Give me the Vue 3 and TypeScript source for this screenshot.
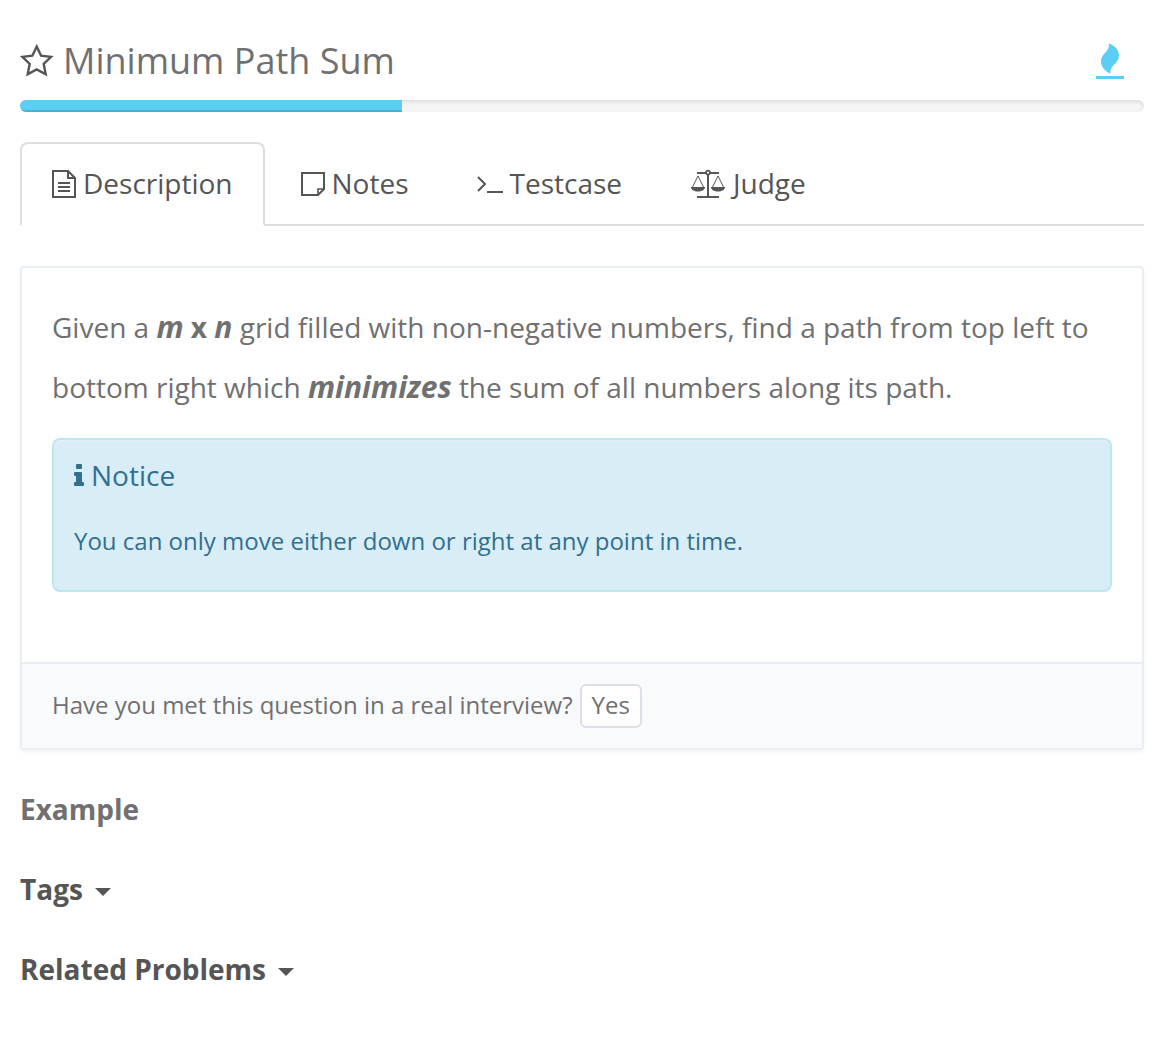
<script setup lang="ts">
import { ref } from 'vue'

type TabId = 'description' | 'notes' | 'testcase' | 'judge'

const tabs: { id: TabId; label: string; iconWidth: number }[] = [
  { id: 'description', label: 'Description', iconWidth: 24 },
  { id: 'notes', label: 'Notes', iconWidth: 24 },
  { id: 'testcase', label: 'Testcase', iconWidth: 26 },
  { id: 'judge', label: 'Judge', iconWidth: 36 },
]

const active = ref<TabId>('description')
const progress = 34
</script>

<template>
  <main class="page">
    <header class="header">
      <h1 class="title">
        <button class="star" type="button" aria-label="Add to favourites">
          <svg width="34" height="34" viewBox="0 0 34 34" aria-hidden="true">
            <path
              d="M16.7 2.6 L21 11.6 L31 12.9 L23.7 19.8 L25.7 30.2 L16.7 25.4 L7.7 30.2 L9.7 19.8 L2.4 12.9 L12.4 11.6 Z"
              fill="none"
              stroke="#555"
              stroke-width="2.4"
            />
          </svg>
        </button>
        <span>Minimum Path Sum</span>
      </h1>
      <svg class="flame" width="28" height="40" viewBox="0 0 28 40" aria-hidden="true">
        <path
          d="M12.7 2.3 C19 5 23 9 23 14.5 C23 23 13.5 24 14.4 32.7 C9 30 5 26 5 20.5 C5 12 14.5 11 12.7 2.3 Z"
          fill="#5bcff3"
        />
        <rect x="0" y="35" width="28" height="3" fill="#5bcff3" />
      </svg>
    </header>

    <div class="progress" role="progressbar" aria-label="Acceptance" :aria-valuenow="progress">
      <div class="bar" :style="{ width: progress + '%' }"></div>
    </div>

    <nav class="tabs">
      <a
        v-for="tab in tabs"
        :key="tab.id"
        class="tab"
        :class="{ active: tab.id === active }"
        :href="'#' + tab.id"
        @click.prevent="active = tab.id"
      >
        <svg
          :width="tab.iconWidth"
          height="30"
          :viewBox="`0 -1 ${tab.iconWidth} 30`"
          fill="none"
          stroke="#555"
          stroke-width="2"
          aria-hidden="true"
        >
          <template v-if="tab.id === 'description'">
            <path d="M1 2 H16 L23 9 V28 H1 Z M16 2 V9 H23" />
            <path d="M6 14 H18 M6 18 H18 M6 22 H18" />
          </template>
          <template v-else-if="tab.id === 'notes'">
            <path d="M1 4 H23 V20 L17 26 H1 Z" />
            <path d="M17 26 V20 H23" stroke-width="1.6" />
          </template>
          <template v-else-if="tab.id === 'testcase'">
            <path d="M1 8 L8 15 L1 22" />
            <path d="M10 23 H26" />
          </template>
          <template v-else>
            <path d="M7 4 H29 M7 28 H29" />
            <path d="M18 6 V28" />
            <circle cx="18" cy="3.6" r="2" fill="#fff" stroke-width="1.6" />
            <path d="M2.5 18 L8 7 L13.5 18 M22.5 18 L28 7 L33.5 18" stroke-width="1" />
            <path
              d="M1 18 H15 C15 24 1 24 1 18 Z M21 18 H35 C35 24 21 24 21 18 Z"
              fill="#555"
              stroke="none"
            />
          </template>
        </svg>
        <span>{{ tab.label }}</span>
      </a>
    </nav>

    <section class="card">
      <div class="card-body">
        <p class="statement">
          Given a <b><i>m</i> x <i>n</i></b> grid filled with non-negative numbers, find a path from
          top left to bottom right which <b><i>minimizes</i></b> the sum of all numbers along its
          path.
        </p>
        <aside class="notice">
          <h2 class="notice-title">
            <svg width="10" height="22" viewBox="0 0 10 22" fill="#31708f" aria-hidden="true">
              <rect x="2" y="0" width="6" height="5" rx="1" />
              <path
                d="M1 8 H7 Q8 8 8 9 V18 H9 Q10 18 10 19 V21 Q10 22 9 22 H1 Q0 22 0 21 V19 Q0 18 1 18 H2 V12 H1 Q0 12 0 11 V9 Q0 8 1 8 Z"
              />
            </svg>
            <span>Notice</span>
          </h2>
          <p class="notice-text">You can only move either down or right at any point in time.</p>
        </aside>
      </div>
      <footer class="card-footer">
        <span class="question">Have you met this question in a real interview?</span>
        <button class="yes" type="button">Yes</button>
      </footer>
    </section>

    <h2 class="section example">Example</h2>
    <h2 class="section">
      <button class="toggle" type="button">Tags <span class="caret"></span></button>
    </h2>
    <h2 class="section">
      <button class="toggle" type="button">Related Problems <span class="caret"></span></button>
    </h2>
  </main>
</template>

<style>
body {
  background: #fff;
}
</style>

<style scoped>
.page {
  padding: 36px 24px 40px 20px;
  font-family: 'Open Sans', 'Noto Sans', sans-serif;
  font-size: 28px;
  color: #707070;
}

h1,
h2,
p {
  margin: 0;
  font-weight: 400;
}

button {
  font: inherit;
  color: inherit;
  cursor: pointer;
}

.header {
  display: flex;
  justify-content: space-between;
  align-items: center;
  padding-right: 20px;
}

.title {
  display: flex;
  align-items: center;
  gap: 9px;
  font-size: 36px;
  line-height: 50px;
}

.star {
  display: flex;
  padding: 0;
  border: 0;
  background: none;
}

.progress {
  margin-top: 14px;
  height: 12px;
  border-radius: 6px;
  overflow: hidden;
  background: #f5f5f5;
  box-shadow: inset 0 2px 4px rgba(0, 0, 0, 0.1);
}

.bar {
  height: 100%;
  background: #5bcff3;
  box-shadow: inset 0 -2px 0 rgba(0, 0, 0, 0.15);
}

.tabs {
  display: flex;
  gap: 4px;
  margin-top: 30px;
  border-bottom: 2px solid #ddd;
}

.tab {
  display: flex;
  align-items: center;
  gap: 7px;
  margin-bottom: -2px;
  padding: 19px 30px 21px;
  border: 2px solid transparent;
  border-radius: 8px 8px 0 0;
  line-height: 40px;
  color: #555;
  text-decoration: none;
}

.tab.active {
  border-color: #ddd;
  border-bottom-color: #fff;
  background: #fff;
}

.card {
  margin-top: 40px;
  border: 2px solid #e9eef6;
  border-radius: 4px;
  box-shadow: 0 2px 4px rgba(0, 0, 0, 0.05);
}

.card-body {
  padding: 29px 30px 70px;
}

.statement {
  line-height: 60px;
}

.statement i {
  font-size: 30px;
  line-height: 40px;
}

.notice {
  margin-top: 21px;
  padding: 15px 20px 29px;
  border: 2px solid #bce8f1;
  border-radius: 8px;
  background: #d9edf7;
  box-shadow: inset 0 2px 0 rgba(255, 255, 255, 0.2);
  color: #31708f;
}

.notice-title {
  display: flex;
  align-items: center;
  gap: 7px;
  font-size: 28px;
  line-height: 40px;
}

.notice-text {
  margin-top: 26px;
  font-size: 24px;
  line-height: 40px;
}

.card-footer {
  display: flex;
  align-items: center;
  gap: 7px;
  padding: 20px 30px;
  border-top: 2px solid #e9eef6;
  background: #f9fafc;
  font-size: 24px;
  line-height: 38px;
}

.question {
  padding-bottom: 2px;
}

.yes {
  padding: 0 10px 2px;
  border: 2px solid #dedfe9;
  border-radius: 6px;
  background: #fff;
  box-shadow: inset 0 -2px 2px rgba(0, 0, 0, 0.03);
  line-height: 38px;
}

.section {
  margin-top: 40px;
  font-size: 28px;
  font-weight: 700;
  line-height: 40px;
  color: #555;
}

.section.example {
  margin-top: 39px;
  color: #707070;
}

.toggle {
  display: flex;
  align-items: center;
  gap: 12px;
  padding: 0;
  border: 0;
  background: none;
}

.caret {
  margin-top: 6px;
  border: 8px solid transparent;
  border-top-color: #555;
  border-bottom: 0;
}
</style>
